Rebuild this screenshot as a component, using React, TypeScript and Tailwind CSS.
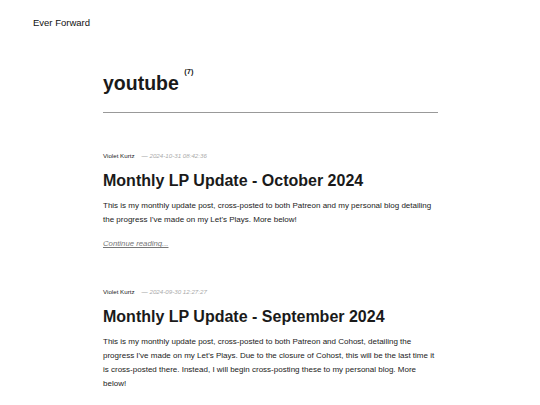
import React from 'react';

interface Post {
  id: string;
  author: string;
  date: string;
  title: string;
  excerpt: string;
}

const posts: Post[] = [
  {
    id: 'oct-2024',
    author: 'Violet Kurtz',
    date: '2024-10-31 08:42:36',
    title: 'Monthly LP Update - October 2024',
    excerpt:
      "This is my monthly update post, cross-posted to both Patreon and my personal blog detailing the progress I've made on my Let's Plays. More below!",
  },
  {
    id: 'sep-2024',
    author: 'Violet Kurtz',
    date: '2024-09-30 12:27:27',
    title: 'Monthly LP Update - September 2024',
    excerpt:
      "This is my monthly update post, cross-posted to both Patreon and Cohost, detailing the progress I've made on my Let's Plays. Due to the closure of Cohost, this will be the last time it is cross-posted there. Instead, I will begin cross-posting these to my personal blog. More below!",
  },
];

const PostItem = ({ post }: { post: Post }) => (
  <article className="mb-[35px]">
    <div className="flex items-center text-[6.2px] leading-[12px] text-[#222]">
      <span>{post.author}</span>
      <span className="ml-[7px] text-[#aaa] italic">— {post.date}</span>
    </div>
    <h2 className="mt-[7px] text-[16px] leading-[24px] font-bold text-[#1a1a1a]">{post.title}</h2>
    <p className="mt-[6px] text-[8px] leading-[13.7px] text-[#222]">{post.excerpt}</p>
    <a href="#" className="mt-[11px] block text-[7.75px] leading-[14px] italic underline text-[#777]">
      Continue reading...
    </a>
  </article>
);

export default function App() {
  return (
    <div className="min-h-screen bg-white text-[#222]" style={{ fontFamily: '"Liberation Sans", Arial, sans-serif' }}>
      <header className="px-[33px] pt-[17px] text-[9.5px] leading-[12px]">
        <a href="#" className="text-[#111]">Ever Forward</a>
      </header>

      <main className="ml-[103px] w-[335px]">
        <div className="mt-[42px] pb-[17px] border-b border-[#999]">
          <h1 className="text-[19.5px] leading-[24px] font-bold text-[#1a1a1a]">
            youtube <sup className="text-[7.5px] font-bold align-[12px]">(7)</sup>
          </h1>
        </div>

        <div className="mt-[37px]">
          {posts.map((post) => (
            <PostItem key={post.id} post={post} />
          ))}
        </div>
      </main>
    </div>
  );
}
